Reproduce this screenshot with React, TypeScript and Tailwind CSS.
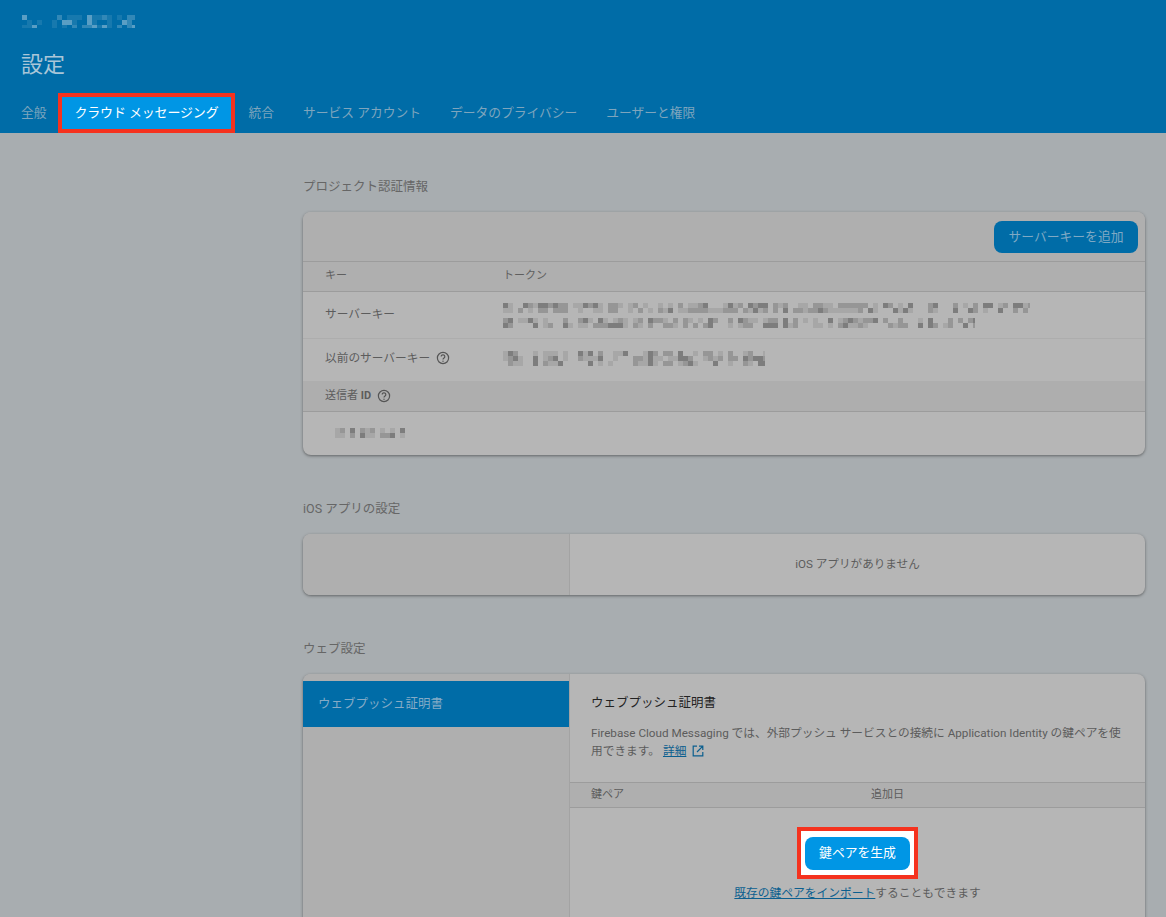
import React from "react";

const font = { fontFamily: '"Roboto","Noto Sans CJK JP","Liberation Sans",sans-serif' };

function Mosaic({ width, height, seed, color, cell = 5 }: { width: number; height: number; seed: number; color: string; cell?: number }) {
  const rects: React.ReactNode[] = [];
  let s = seed;
  const next = () => {
    s = (s * 9301 + 49297) % 233280;
    return s / 233280;
  };
  const cols = Math.ceil(width / cell);
  const rows = Math.ceil(height / cell);
  for (let c = 0; c < cols; c++) {
    const gap = next() < 0.16;
    for (let r = 0; r < rows; r++) {
      const v = next();
      if (gap || v < 0.3) continue;
      const o = v > 0.84 ? 0.5 : v > 0.6 ? 0.28 : 0.13;
      rects.push(<rect key={c + "-" + r} x={c * cell} y={r * cell} width={cell} height={cell} fill={color} opacity={o} />);
    }
  }
  return (
    <svg width={width} height={height} className="block blur-[0.6px]" aria-hidden="true">
      {rects}
    </svg>
  );
}

function Help() {
  return (
    <svg width="14" height="14" viewBox="0 0 14 14" fill="none" stroke="#555" className="shrink-0">
      <circle cx="7" cy="7" r="5.6" strokeWidth="1.2" />
      <path d="M5.2 5.6a1.8 1.8 0 1 1 2.8 1.5c-.7.5-1 .8-1 1.5" strokeWidth="1.2" />
      <circle cx="7" cy="10.2" r=".7" fill="#555" stroke="none" />
    </svg>
  );
}

function Tab({ children, active }: { children: React.ReactNode; active?: boolean }) {
  if (active) {
    return (
      <div className="border-4 border-[#f5321e] h-[40px] w-[177px] -ml-[18px] -mr-[15px] flex shrink-0">
        <div className="bg-[#0096e5] text-white flex-1 flex items-center justify-center pl-[1px] text-[13px] tracking-[-0.15px] whitespace-nowrap">{children}</div>
      </div>
    );
  }
  return <div className="text-[#7ea5bd] text-[12.75px] h-[40px] flex items-center whitespace-nowrap">{children}</div>;
}

const cardClass = "rounded-[8px] bg-[#b6b6b6] shadow-[0_1px_3px_rgba(40,40,40,0.55)] overflow-hidden";
const heading = "h-[18px] leading-[20px] font-normal text-[12.5px] text-[#666]";

export default function App() {
  return (
    <div style={font} className="h-[917px] w-[1166px] overflow-hidden bg-[#a8adb0] text-[12.8px] text-[#5c5c5c] flex flex-col">
      <header className="h-[133px] shrink-0 bg-[#006ca7] pl-[22px] flex flex-col">
        <div className="h-[15px] shrink-0" />
        <Mosaic width={113} height={13} seed={17} color="#b4d0e2" cell={5} />
        <h1 className="text-[22px] leading-[30px] mt-[22px] -ml-[1px] font-normal text-[#a9c6d8]">設定</h1>
        <nav className="flex items-center gap-[29px] mt-[13px] -ml-[1px]">
          <Tab>全般</Tab>
          <Tab active>クラウド メッセージング</Tab>
          <Tab>統合</Tab>
          <Tab>サービス アカウント</Tab>
          <Tab>データのプライバシー</Tab>
          <Tab>ユーザーと権限</Tab>
        </nav>
      </header>

      <main className="pl-[303px] pr-[21px] flex flex-col">
        <h2 className={heading + " mt-[44px]"}>プロジェクト認証情報</h2>
        <section className={cardClass + " mt-[17px] h-[243px] shrink-0 flex flex-col"}>
          <div className="h-[49px] bg-[#afafaf] flex items-center justify-end pr-[7px] pt-[1px] shrink-0">
            <div className="h-[32px] w-[144px] rounded-[8px] bg-[#006ca7] text-[#7fa9c4] flex items-center justify-center">サーバーキーを追加</div>
          </div>
          <div className="h-[31px] bg-[#afafaf] border-y border-[#9c9c9c] flex items-center text-[11px] text-[#5f5f5f] shrink-0">
            <div className="w-[200px] pl-[22px]">キー</div>
            <div>トークン</div>
          </div>
          <div className="h-[47px] border-b border-[#adadad] flex items-center shrink-0">
            <div className="w-[200px] pl-[22px] text-[11.7px]">サーバーキー</div>
            <div className="flex flex-col gap-[5px]">
              <Mosaic width={527} height={10} seed={5} color="#444" />
              <Mosaic width={472} height={10} seed={91} color="#444" />
            </div>
          </div>
          <div className="h-[42px] flex items-center pb-[3px] shrink-0">
            <div className="w-[200px] pl-[22px] text-[11.7px] flex items-center gap-[6px]">以前のサーバーキー<Help /></div>
            <Mosaic width={262} height={15} seed={44} color="#444" />
          </div>
          <div className="h-[31px] bg-[#aeaeae] border-b border-[#9c9c9c] flex items-center gap-[6px] pl-[22px] text-[11px] shrink-0">
            <span>送信者 <b className="font-bold">ID</b></span>
            <Help />
          </div>
          <div className="flex-1 flex items-center pl-[27px] pb-[1px]">
            <Mosaic width={75} height={10} seed={23} color="#444" />
          </div>
        </section>

        <h2 className={heading + " mt-[44px]"}>iOS アプリの設定</h2>
        <section className={cardClass + " mt-[17px] h-[61px] shrink-0 flex"}>
          <div className="w-[266px] bg-[#afafaf] border-r border-[#a3a3a3] box-content" />
          <div className="flex-1 flex items-center justify-center text-[11.6px]">iOS アプリがありません</div>
        </section>

        <h2 className={heading + " mt-[44px]"}>ウェブ設定</h2>
        <section className={cardClass + " mt-[17px] h-[320px] shrink-0 flex rounded-b-none"}>
          <div className="w-[266px] box-content bg-[#afafaf] border-r border-[#a3a3a3] pt-[7px] shrink-0">
            <div className="h-[46px] bg-[#006ca7] text-[#85abc6] text-[12.5px] flex items-center pl-[15px]">ウェブプッシュ証明書</div>
          </div>
          <div className="flex-1 min-w-0 flex flex-col">
            <div className="h-[108px] pl-[21px] pt-[20px] shrink-0">
              <h3 className="font-normal text-[12.5px] text-[#222] leading-[18px]">ウェブプッシュ証明書</h3>
              <p className="mt-[12px] text-[11.7px] leading-[18px] text-[#5c5c5c] w-[533px]">
                Firebase Cloud Messaging では、外部プッシュ サービスとの接続に Application Identity の鍵ペアを使用できます。
                <span className="inline-flex items-center gap-[6px] ml-[3px] align-baseline">
                  <span className="text-[#0b5f8f] underline">詳細</span>
                  <svg width="12" height="12" viewBox="0 0 12 12" fill="none" stroke="#0b5f8f" strokeWidth="1.2">
                    <path d="M5 1.2H1.2v9.6h9.6V7M7 1.2h3.8V5M10.6 1.4 5 7" />
                  </svg>
                </span>
              </p>
            </div>
            <div className="h-[26px] bg-[#afafaf] border-y border-[#9c9c9c] flex items-center text-[11px] shrink-0">
              <div className="w-[301px] pl-[21px]">鍵ペア</div>
              <div>追加日</div>
            </div>
            <div className="flex flex-col items-center pt-[19px]">
              <div className="border-4 border-[#f5321e] w-[121px] h-[52px] bg-white flex items-center justify-center">
                <div className="h-[33px] w-[105px] rounded-[8px] bg-[#0096e5] text-white flex items-center justify-center">鍵ペアを生成</div>
              </div>
              <p className="mt-[5px] text-[11.75px] leading-[18px]"><span className="text-[#0b5f8f] underline">既存の鍵ペアをインポート</span>することもできます</p>
            </div>
          </div>
        </section>
      </main>
    </div>
  );
}
